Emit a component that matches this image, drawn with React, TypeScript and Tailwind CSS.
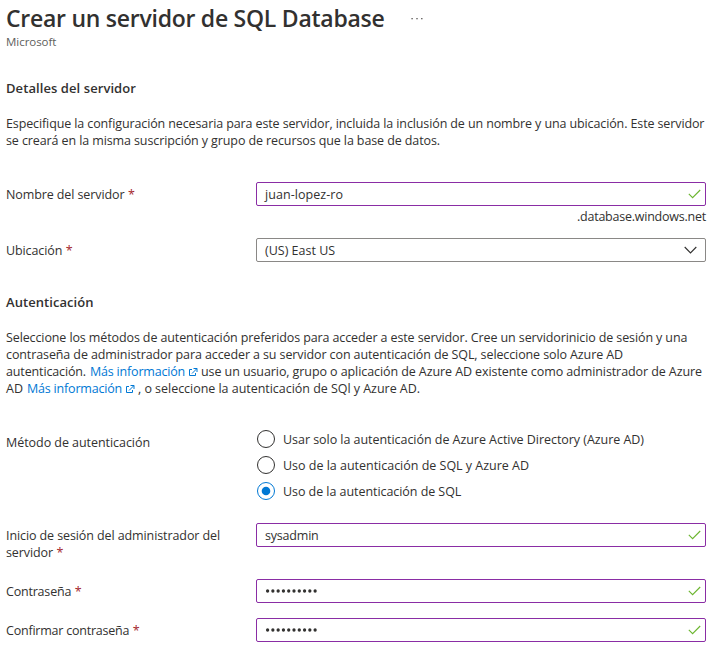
import type { ReactNode } from "react";

const Check = () => (
  <svg className="h-[10px] w-[13px] shrink-0" viewBox="0 0 13 10" fill="none">
    <path d="M0.8 4.8 L4.6 8.6 L12.2 1" stroke="#6bb52f" strokeWidth="1.1" />
  </svg>
);

const External = () => (
  <svg className="h-2 w-[9px] shrink-0" viewBox="0 0 9 8" fill="none" stroke="#0078d4">
    <path d="M3 1.5 H0.5 V7.5 H6.5 V5" />
    <path d="M4.5 0.5 H8 V4 M7.8 0.7 L3 5.5" />
  </svg>
);

const Required = () => <span className="ml-[3.5px] tracking-normal text-[#a4262c]">*</span>;

function Link({ children }: { children: ReactNode }) {
  return (
    <a className="flex items-center gap-1 text-[#0078d4]">
      <span className="tracking-[-0.193px]">{children}</span>
      <External />
    </a>
  );
}

function TextField({ children }: { children: ReactNode }) {
  return (
    <div className="flex h-6 w-[450px] items-center justify-between rounded-[2px] border border-[#8a2da5] pr-1 pl-2">
      {children}
      <Check />
    </div>
  );
}

function Password() {
  return (
    <svg className="h-1 w-[54px]" viewBox="0 0 54 4" fill="#323130">
      {Array.from({ length: 10 }, (_, i) => (
        <circle key={i} cx={2.6 + i * 5.28} cy="2" r="1.65" />
      ))}
    </svg>
  );
}

function Radio({ checked, children }: { checked?: boolean; children: ReactNode }) {
  return (
    <div className="flex h-[26px] items-center gap-[7px]">
      <svg className="h-5 w-5" viewBox="0 0 20 20" fill="none">
        <circle cx="10" cy="10" r="8.5" stroke={checked ? "#0078d4" : "#323130"} />
        {checked && <circle cx="10" cy="10" r="4.3" fill="#0078d4" />}
      </svg>
      {children}
    </div>
  );
}

export default function App() {
  return (
    <main className="h-[654px] w-[717px] overflow-hidden bg-white pl-1.5 font-['Open_Sans','Noto_Sans',sans-serif] text-[12.5px] leading-[17px] whitespace-nowrap text-[#323130]">
      <header className="h-[80px] pt-0.5">
        <div className="flex h-8 items-center">
          <h1 className="w-[405px] text-[23px] leading-8 font-semibold tracking-[-0.26px]">Crear un servidor de SQL Database</h1>
          <svg className="h-[3px] w-3" viewBox="0 0 12 3" fill="#605e5c">
            <rect x="0.4" y="1" width="1.4" height="1.3" />
            <rect x="5.3" y="1" width="1.4" height="1.3" />
            <rect x="10.1" y="1" width="1.4" height="1.3" />
          </svg>
        </div>
        <p className="text-[11.5px] leading-4 tracking-[-0.04px] text-[#605e5c]">Microsoft</p>
      </header>

      <h2 className="text-[13px] font-semibold tracking-[0.077px]">Detalles del servidor</h2>
      <div className="mt-[18px]">
        <p className="tracking-[-0.115px]">Especifique la configuración necesaria para este servidor, incluida la inclusión de un nombre y una ubicación. Este servidor</p>
        <p className="tracking-[-0.105px]">se creará en la misma suscripción y grupo de recursos que la base de datos.</p>
      </div>

      <div className="mt-[33px] flex h-14">
        <label className="mt-1 w-[250px] tracking-[-0.1px]">Nombre del servidor<Required /></label>
        <div className="w-[450px]">
          <TextField><span className="tracking-[0.053px]">juan-lopez-ro</span></TextField>
          <p className="mt-0.5 text-right tracking-[-0.232px]">.database.windows.net</p>
        </div>
      </div>

      <div className="flex h-14">
        <label className="mt-1 w-[250px] tracking-[-0.1px]">Ubicación<Required /></label>
        <div className="flex h-6 w-[450px] items-center justify-between rounded-[2px] border border-[#8a8886] pr-[7px] pl-2">
          <span>(US) East US</span>
          <svg className="h-2 w-[14px]" viewBox="0 0 14 8" fill="none">
            <path d="M0.7 1 L6.5 6.9 L12.3 1" stroke="#323130" strokeWidth="1.1" />
          </svg>
        </div>
      </div>

      <h2 className="text-[13px] font-semibold tracking-[0.06px]">Autenticación</h2>
      <div className="mt-[18px]">
        <p className="tracking-[-0.112px]">Seleccione los métodos de autenticación preferidos para acceder a este servidor. Cree un servidorinicio de sesión y una</p>
        <p className="tracking-[-0.107px]">contraseña de administrador para acceder a su servidor con autenticación de SQL, seleccione solo Azure AD</p>
        <div className="flex">
          <span className="w-[84px] tracking-[-0.137px]">autenticación.</span>
          <Link>Más información</Link>
          <span className="ml-[3px] tracking-[-0.084px]">use un usuario, grupo o aplicación de Azure AD existente como administrador de Azure</span>
        </div>
        <div className="flex">
          <span className="w-[21px]">AD</span>
          <Link>Más información</Link>
          <span className="ml-[3px] tracking-[-0.033px]">, o seleccione la autenticación de SQl y Azure AD.</span>
        </div>
      </div>

      <div className="mt-[29px] flex h-[97px]">
        <span className="mt-2 w-[250px] tracking-[-0.051px]">Método de autenticación</span>
        <div>
          <Radio><span className="tracking-[-0.045px]">Usar solo la autenticación de Azure Active Directory (Azure AD)</span></Radio>
          <Radio><span className="tracking-[-0.013px]">Uso de la autenticación de SQL y Azure AD</span></Radio>
          <Radio checked><span className="tracking-[-0.056px]">Uso de la autenticación de SQL</span></Radio>
        </div>
      </div>

      <div className="flex h-14">
        <label className="mt-1 w-[250px] tracking-[-0.097px]">Inicio de sesión del administrador del<br />servidor<Required /></label>
        <TextField><span className="tracking-[-0.2px]">sysadmin</span></TextField>
      </div>
      <div className="flex h-[39px]">
        <label className="mt-1 w-[250px] tracking-[-0.2px]">Contraseña<Required /></label>
        <TextField><Password /></TextField>
      </div>
      <div className="flex">
        <label className="mt-1 w-[250px] tracking-[-0.22px]">Confirmar contraseña<Required /></label>
        <TextField><Password /></TextField>
      </div>
    </main>
  );
}
